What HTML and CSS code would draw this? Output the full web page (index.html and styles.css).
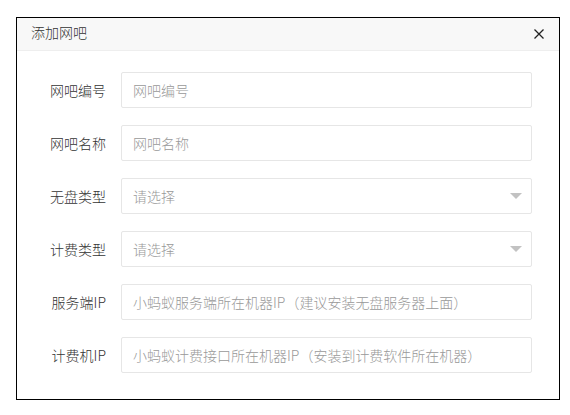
FILE: index.html
```html
<!DOCTYPE html>
<html lang="zh-CN">
  <head>
    <meta charset="UTF-8" />
    <title>添加网吧</title>
    <link rel="stylesheet" href="styles.css">
  </head>
  <body>
    <div class="dialog">
      <div class="dialog-head">
        <span class="dialog-title">添加网吧</span>
        <a href="javascript:;" class="dialog-close">
          <svg width="12" height="12" viewBox="0 0 12 12">
            <path d="M1.5 1.5L10.5 10.5M10.5 1.5L1.5 10.5" stroke="#222" stroke-width="1.3" fill="none" />
          </svg>
        </a>
      </div>
      <form class="form">
        <div class="form-item">
          <label class="form-label">网吧编号</label>
          <input class="form-input" type="text" placeholder="网吧编号" />
        </div>
        <div class="form-item">
          <label class="form-label">网吧名称</label>
          <input class="form-input" type="text" placeholder="网吧名称" />
        </div>
        <div class="form-item">
          <label class="form-label">无盘类型</label>
          <div class="form-select">
            <input class="form-input" type="text" placeholder="请选择" readonly />
            <i class="select-arrow"></i>
          </div>
        </div>
        <div class="form-item">
          <label class="form-label">计费类型</label>
          <div class="form-select">
            <input class="form-input" type="text" placeholder="请选择" readonly />
            <i class="select-arrow"></i>
          </div>
        </div>
        <div class="form-item">
          <label class="form-label">服务端IP</label>
          <input class="form-input" type="text" placeholder="小蚂蚁服务端所在机器IP（建议安装无盘服务器上面）" />
        </div>
        <div class="form-item">
          <label class="form-label">计费机IP</label>
          <input class="form-input" type="text" placeholder="小蚂蚁计费接口所在机器IP（安装到计费软件所在机器）" />
        </div>
      </form>
    </div>
  </body>
</html>
```

FILE: styles.css
```css
* {
  box-sizing: border-box;
}
body {
  margin: 0;
  padding: 17px 0 0 16px;
  background: #fff;
  font: 300 14px "Noto Sans CJK SC", "Liberation Sans", sans-serif;
  color: #333;
}
.dialog {
  width: 544px;
  height: 383px;
  border: 1px solid #000;
  background: #fff;
}
.dialog-head {
  display: flex;
  align-items: center;
  justify-content: space-between;
  height: 33px;
  padding: 0 14px 0 14px;
  background: #f8f8f8;
  border-bottom: 1px solid #eee;
}
.dialog-title {
  font-size: 14px;
  line-height: 20px;
  margin-top: -4px;
  color: #333;
}
.dialog-close {
  display: flex;
  width: 12px;
  height: 12px;
}
.form {
  display: flex;
  flex-direction: column;
  gap: 17px;
  margin: 0;
  padding: 21px 27px 0 0;
}
.form-item {
  display: flex;
  align-items: center;
  height: 36px;
}
.form-label {
  width: 89px;
  margin-right: 15px;
  text-align: right;
  color: #333;
}
.form-input {
  flex: 1;
  width: 100%;
  height: 36px;
  padding: 0 11px;
  border: 1px solid #e6e6e6;
  border-radius: 2px;
  outline: none;
  font: inherit;
  color: #333;
  background: #fff;
}
.form-input::placeholder {
  color: #999;
}
.form-select {
  position: relative;
  flex: 1;
  display: flex;
}
.select-arrow {
  position: absolute;
  right: 10px;
  top: 15px;
  width: 0;
  height: 0;
  border-style: solid;
  border-width: 6px 6px 0 6px;
  border-color: #c2c2c2 transparent transparent transparent;
}
```
